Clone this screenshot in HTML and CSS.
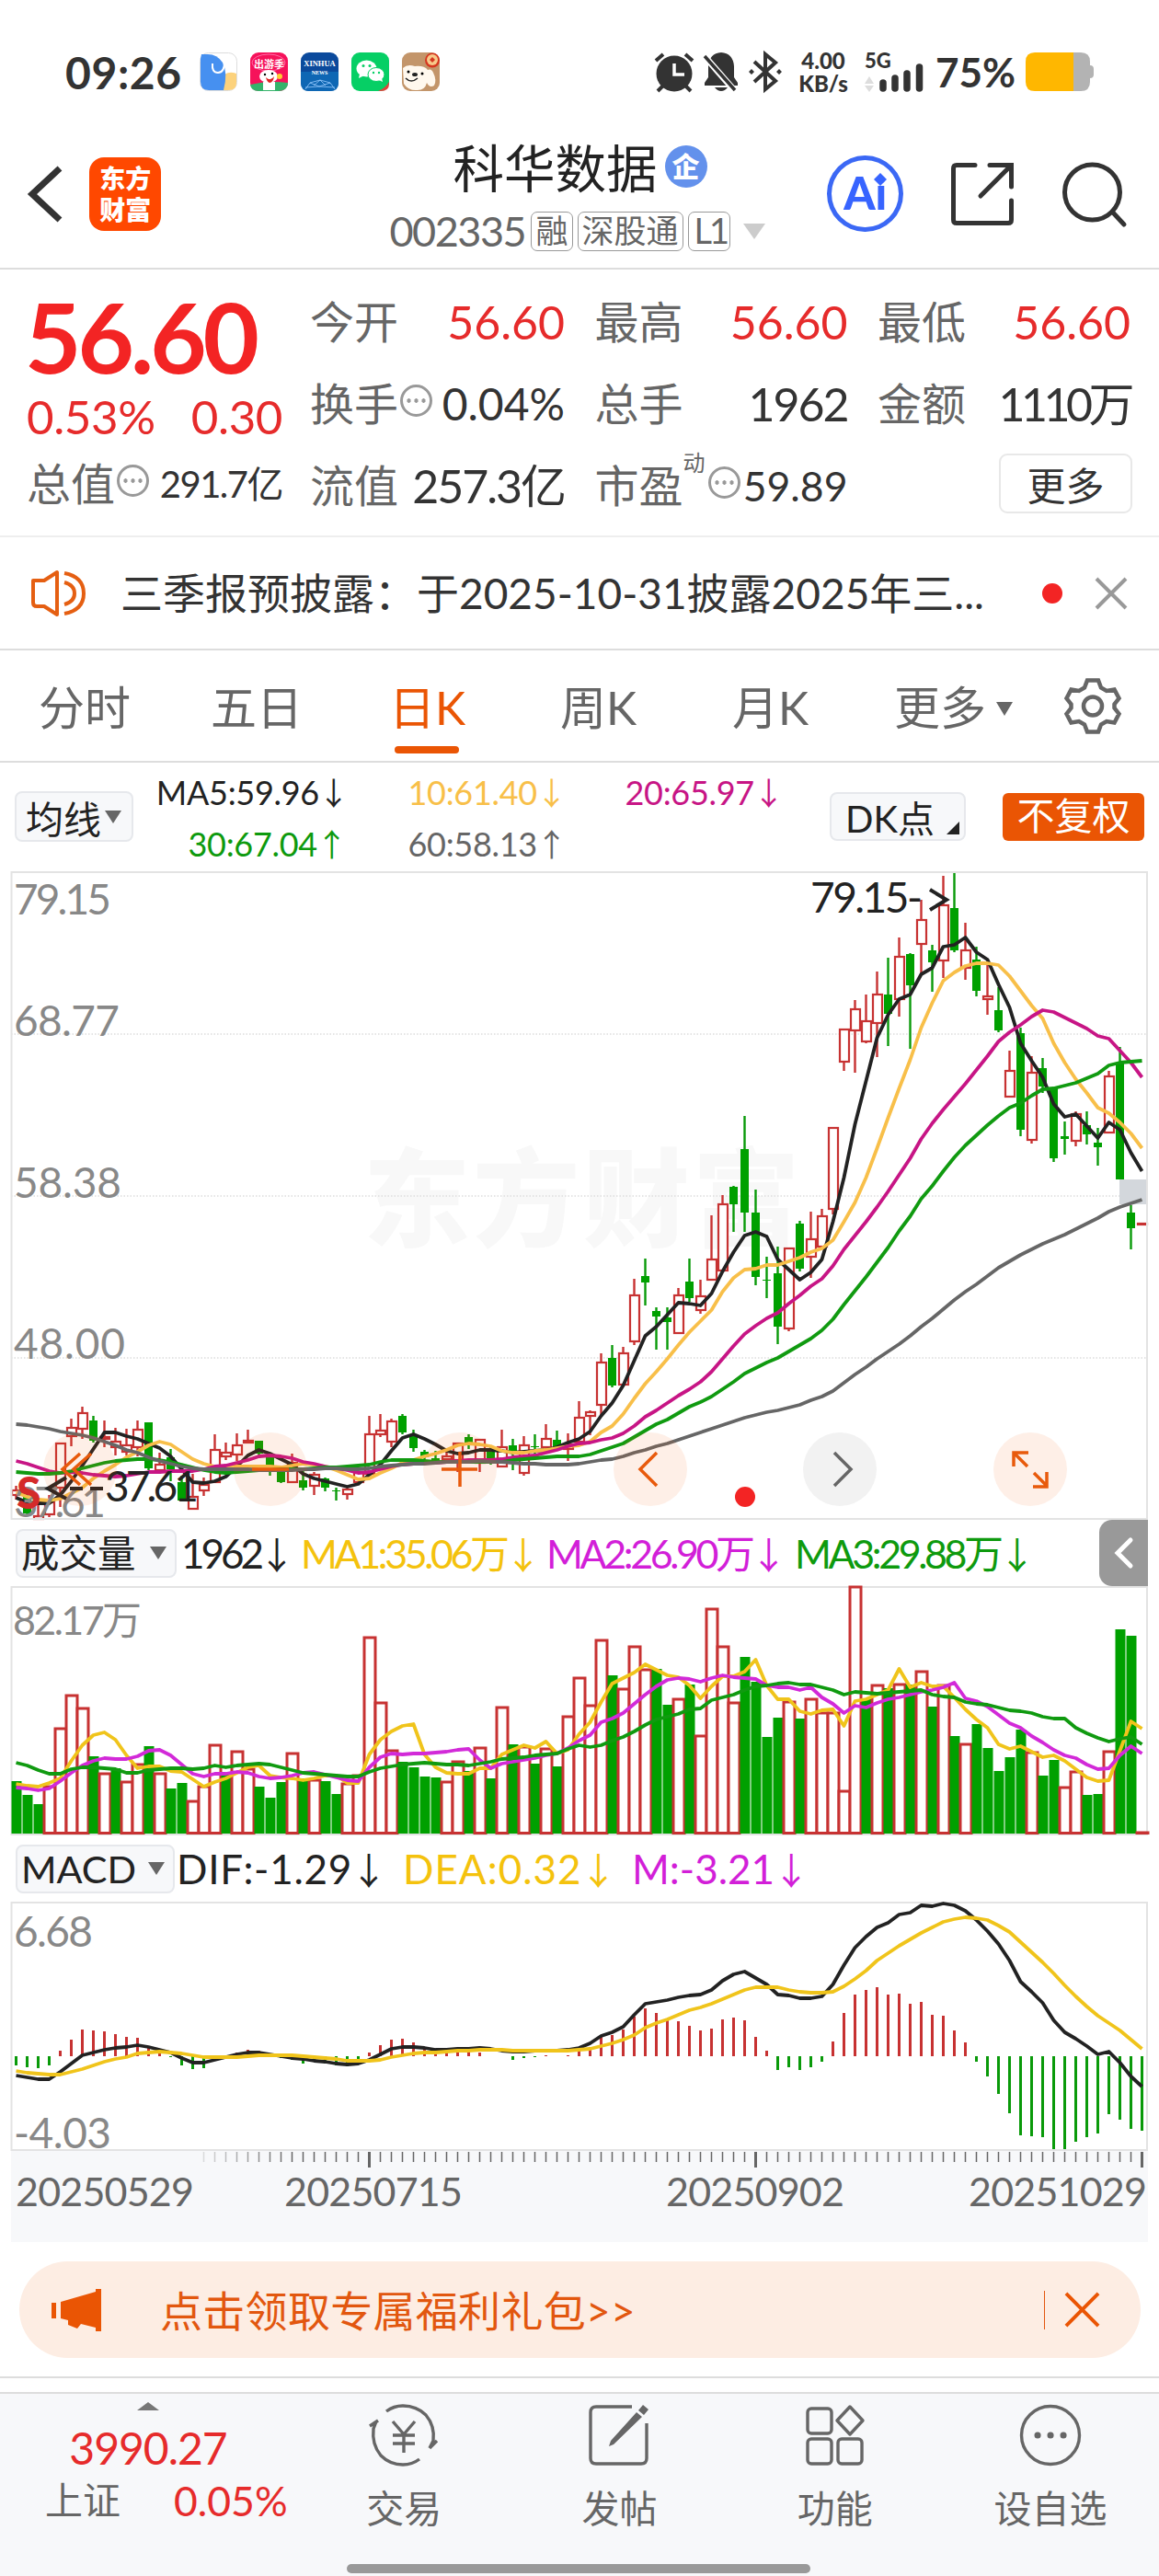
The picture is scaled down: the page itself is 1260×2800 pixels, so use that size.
FILE: index.html
```html
<!DOCTYPE html>
<html lang="zh-CN">

<head>
    <meta charset="UTF-8">
    <meta name="viewport" content="width=device-width, initial-scale=1.0">
    <title>科华数据 002335</title>
    <link rel="stylesheet" href="styles.css">
</head>

<body>
    <!-- Status bar -->
    <div class="status-bar">
        <span class="clock">09:26</span>
        <div class="app-icons">
            <svg viewBox="0 0 41 42">
                <rect x=".5" y=".5" width="40" height="41" rx="9" fill="#fff" stroke="#ddd" />
                <path d="M27 24q6-4 13-1v10q0 8-9 8h-8z" fill="#fcd27c" />
                <path d="M2 2h7q10 0 16 9 6 11 1 30H10q-9 0-9-9V7z" fill="#4690f0" />
                <path d="M14 12q-1 10 6 10 7 0 7-12" fill="none" stroke="#fff" stroke-width="2" />
            </svg>
            <svg viewBox="0 0 41 42">
                <rect width="41" height="42" rx="9" fill="#f6125a" />
                <path d="M0 35q20-5 41-2v2q-2 7-10 7H9q-8 0-9-7z" fill="#35b36b" />
                <ellipse cx="20" cy="11" rx="18" ry="9" fill="none" stroke="#ff6aa5" />
                <text x="20.500" y="17" text-anchor="middle" class="app-cn">出游季</text>
                <ellipse cx="20" cy="26" rx="10" ry="7" fill="#fff" />
                <path d="M14 32h13v9H14z" fill="#fff" />
                <path d="M17 27q5 5 9-1-1 7-5 7-3-1-4-6z" fill="#d22" />
                <circle cx="16" cy="24" r="1.200" /><circle cx="24" cy="23" r="1.200" />
                <circle cx="32" cy="26" r="3" fill="#fc3" />
            </svg>
            <svg viewBox="0 0 41 42">
                <rect width="41" height="42" rx="9" fill="#0b4a9c" />
                <path d="M0 21h41v12q0 9-9 9H9q-9 0-9-9z" fill="#0e67b4" />
                <text x="20.500" y="15" text-anchor="middle" class="app-en">XINHUA</text>
                <text x="20.500" y="24" text-anchor="middle" class="app-en small">NEWS</text>
                <path d="M5 40l5-7 11-3 11 3 5 7M10 33l10 4 12-4M14 36l7-6 6 6M5 38l15-1 17 1" fill="none" stroke="#9cf" stroke-width=".8" />
            </svg>
            <svg viewBox="0 0 41 42">
                <rect width="41" height="42" rx="9" fill="#06cf65" />
                <path d="M29 42q8-3 12-10v2q0 8-9 8z" fill="#e0443c" />
                <ellipse cx="16.500" cy="17.500" rx="11" ry="9" fill="#fff" />
                <path d="M9 23l-1 5 6-3z" fill="#fff" />
                <ellipse cx="27" cy="24" rx="9" ry="7.500" fill="#fff" stroke="#06cf65" />
                <path d="M30 30l4 2-1-4z" fill="#fff" />
                <circle cx="13" cy="14.500" r="1.500" fill="#06cf65" /><circle cx="20" cy="14.500" r="1.500" fill="#06cf65" />
                <circle cx="24" cy="22" r="1.200" fill="#06cf65" /><circle cx="30" cy="22" r="1.200" fill="#06cf65" />
            </svg>
            <svg viewBox="0 0 41 42">
                <rect width="41" height="42" rx="9" fill="#c3956a" />
                <circle cx="33" cy="8.500" r="8" fill="#d5361f" /><circle cx="33" cy="8" r="6" fill="#f7c98a" />
                <path d="M33 5l3 3-3 3-3-3z" fill="#d5361f" />
                <path d="M1 17q5-5 13-2 10-1 14 4 4-2 6 3 4 8 1 14-5 3-8-3-2 8-10 8-10 1-15-7z" fill="#fff8ee" />
                <path d="M4 28q6 6 13 0" fill="none" stroke="#222" stroke-width="1.500" />
                <ellipse cx="14" cy="24" rx="3" ry="2" fill="#222" /><circle cx="7" cy="21" r="1.500" /><circle cx="22" cy="23" r="1.500" />
            </svg>
        </div>
        <div class="sys-icons">
            <svg class="i-alarm" viewBox="0 0 44 42">
                <circle cx="22" cy="23" r="19.500" fill="#333" />
                <path d="M2 9l8-7M42 9l-8-7M10 36l-6 6M34 36l6 6" stroke="#333" stroke-width="4" />
                <path d="M22 12v12h11" fill="none" stroke="#fff" stroke-width="3.500" />
            </svg>
            <svg class="i-bell" viewBox="0 0 38 42">
                <path d="M19 0q13 1 14 15v12l4 6v3H1v-3l4-6V15Q6 1 19 0zM12 38h14q-3 4-7 4t-7-4z" fill="#333" />
                <path d="M0 3l34 39" stroke="#fff" stroke-width="7" />
                <path d="M1 4l33 37" stroke="#333" stroke-width="3.500" />
            </svg>
            <svg class="i-bt" viewBox="0 0 36 42">
                <path d="M6 10l23 21-11 9V2l11 9L6 32" fill="none" stroke="#333" stroke-width="4" />
                <path d="M3 18l3 3-3 3-3-3zM33 18l3 3-3 3-3-3z" fill="#333" />
            </svg>
            <div class="speed"><span>4.00</span><span>KB/s</span></div>
            <div class="signal">
                <span>5G</span>
                <svg viewBox="0 0 64 42">
                    <path d="M0 34l5-8 5 8zM0 36l5 7 5-7z" fill="#ddd" />
                    <path d="M20 33v6M33 28v11M46 23v16M59.500 16v23" stroke="#333" stroke-width="7.500" stroke-linecap="round" />
                </svg>
            </div>
            <span class="percent">75%</span>
            <svg class="i-battery" viewBox="0 0 74 42">
                <path d="M52 0h8q10 0 10 10v4q4 0 4 4v6q0 4-4 4v4q0 10-10 10h-8z" fill="#b3b3b3" />
                <path d="M52 0H10Q0 0 0 10v22q0 10 10 10h42z" fill="#ffb700" />
            </svg>
        </div>
    </div>

    <!-- Stock title -->
    <header class="header">
        <svg class="i-back" viewBox="0 0 38 62"><path d="M34 3L4 31l30 28" /></svg>
        <div class="logo"><span>东方</span><span>财富</span></div>
        <div class="title">
            <div class="name">科华数据<span class="badge">企</span></div>
            <div class="code"><span class="num">002335</span><span class="tag">融</span><span class="tag">深股通</span><span class="tag l1">L1</span><i class="tri"></i></div>
        </div>
        <div class="ai">Ai<svg viewBox="0 0 14 14"><path d="M7 0l7 7-7 7-7-7z" /></svg></div>
        <svg class="i-share" viewBox="0 0 68 68"><path d="M26 2.500H6q-3.500 0-3.500 3.500v56q0 3.500 3.500 3.500h56q3.500 0 3.500-3.500V41M42 2.500h23.500V26M65 3L32 36" /></svg>
        <svg class="i-search" viewBox="0 0 70 70"><circle cx="32.500" cy="33" r="30" /><path d="M54 54l13 14" /></svg>
    </header>

    <!-- Quote -->
    <section class="quote">
        <div class="quote-left">
            <div class="price">56.60</div>
            <div class="change"><span>0.53%</span><span>0.30</span></div>
            <div class="cell"><label>总值</label><i class="tip"></i><b class="sm">291.7亿</b></div>
        </div>
        <div class="quote-grid">
            <div class="cell red"><label>今开</label><b>56.60</b></div>
            <div class="cell red"><label>最高</label><b>56.60</b></div>
            <div class="cell red"><label>最低</label><b>56.60</b></div>
            <div class="cell"><label>换手</label><i class="tip"></i><b class="md">0.04%</b></div>
            <div class="cell"><label>总手</label><b class="tight">1962</b></div>
            <div class="cell"><label>金额</label><b class="tight wan">1110万</b></div>
            <div class="cell"><label>流值</label><b class="tight">257.3亿</b></div>
            <div class="cell"><label>市盈<sup>动</sup></label><i class="tip pe"></i><b class="md2">59.89</b></div>
            <div class="cell"><button class="more">更多</button></div>
        </div>
    </section>

    <!-- Notice -->
    <div class="notice">
        <svg class="i-horn" viewBox="0 0 60 50">
            <path d="M2 11h12L28 2v46L14 39H6q-4 0-4-4z" />
            <path d="M36 13q11 3 11 12t-11 12M36 3q21 4 21 22T36 47" />
        </svg>
        <span class="notice-text">三季报预披露：于2025-10-31披露2025年三...</span>
        <i class="dot"></i>
        <svg class="i-close" viewBox="0 0 34 34"><path d="M1 1l32 32M33 1L1 33" /></svg>
    </div>

    <!-- Period tabs -->
    <nav class="tabs">
        <span class="t1">分时</span>
        <span class="t2">五日</span>
        <span class="t3 active">日K</span>
        <span class="t4">周K</span>
        <span class="t5">月K</span>
        <span class="t6">更多<i class="tri"></i></span>
        <svg class="i-gear" viewBox="0 0 60 60">
            <path d="M24 2.500h12l3 8 6 3.500 8.500-1.500 5 9.500-5 6.500v4l5 6.500-5 9.500-8.500-1.500-6 3.500-3 8H24l-3-8-6-3.500-8.500 1.500-5-9.500 5-6.500v-4l-5-6.500 5-9.500L15 14l6-3.500z" />
            <circle cx="30" cy="30.500" r="10" />
        </svg>
    </nav>

    <!-- MA legend -->
    <div class="ma-row">
        <span class="select ma-select">均线<i class="tri"></i></span>
        <div class="ma-grid">
            <span class="ma5">MA5:59.96<em>↓</em></span>
            <span class="ma10">10:61.40<em>↓</em></span>
            <span class="ma20">20:65.97<em>↓</em></span>
            <span class="ma30">30:67.04<em>↑</em></span>
            <span class="ma60">60:58.13<em>↑</em></span>
        </div>
        <span class="select dk">DK点<i class="corner"></i></span>
        <span class="fq">不复权</span>
    </div>

    <!-- K line -->
    <div class="kline">
        <svg id="kline" viewBox="0 947 1260 705" width="1260" height="705">
            <text class="watermark" x="395" y="1346" textLength="474">东方财富</text>
            <path class="grid" d="M12 1124H1247M12 1300H1247M12 1476H1247" />
            <rect class="gap" x="1217" y="1282" width="30" height="27" />
            <g id="k-data"></g>
            <text class="axis" x="15" y="994" textLength="106">79.15</text>
            <text class="axis" x="15" y="1126" textLength="115">68.77</text>
            <text class="axis" x="15" y="1302" textLength="117">58.38</text>
            <text class="axis" x="15" y="1477" textLength="121">48.00</text>
            <text class="axis" x="15" y="1649" textLength="100">37.61</text>
            <text class="sell" x="18" y="1640">S</text>
            <text class="mark" x="881" y="992" textLength="122">79.15-</text>
            <path class="mark-line" d="M1011 967l18 11-18 11" />
            <path class="mark-line" d="M72 1606L52 1618l20 11M76 1618h14M98 1618h14" />
            <text class="mark" x="114" y="1632" textLength="102">37.61</text>
            <rect class="frame" x="12.500" y="948" width="1234.500" height="703" />
        </svg>
        <div class="tools">
            <i class="tool"><svg viewBox="0 0 80 80"><path d="M40 23L21 40l19 17M52 23L33 40l19 17" /></svg></i>
            <i class="tool"><svg viewBox="0 0 80 80"><path d="M20 40h40" /></svg></i>
            <i class="tool"><svg viewBox="0 0 80 80"><path d="M20 40h39M40 21v38" /></svg></i>
            <i class="tool"><svg viewBox="0 0 80 80"><path d="M47 22L29 40l18 18" /></svg></i>
            <i class="tool gray"><svg viewBox="0 0 80 80"><path d="M34 22l18 18-18 18" /></svg></i>
            <i class="tool"><svg viewBox="0 0 80 80"><path d="M22 37V22h16M23 23l14 14M58 43v16H43M57 57L44 44" /></svg></i>
        </div>
        <i class="dot tool-dot"></i>
    </div>

    <!-- Volume -->
    <div class="legend">
        <span class="select">成交量<i class="tri"></i></span>
        <span class="v0">1962<em>↓</em></span>
        <span class="v1">MA1:35.06万<em>↓</em></span>
        <span class="v2">MA2:26.90万<em>↓</em></span>
        <span class="v3">MA3:29.88万<em>↓</em></span>
        <span class="handle"><svg viewBox="0 0 20 32"><path d="M17 2L3 16l14 14" /></svg></span>
    </div>
    <svg id="volume" viewBox="0 1724 1260 271" width="1260" height="271">
        <rect class="frame" x="12.500" y="1725" width="1234.500" height="269" />
        <text class="axis vol-axis" x="14" y="1777" textLength="140">82.17万</text>
        <g id="v-data"></g>
    </svg>

    <!-- MACD -->
    <div class="legend macd-legend">
        <span class="select">MACD<i class="tri"></i></span>
        <span class="m0">DIF:-1.29<em>↓</em></span>
        <span class="m1">DEA:0.32<em>↓</em></span>
        <span class="m2">M:-3.21<em>↓</em></span>
    </div>
    <svg id="macd" viewBox="0 2067 1260 271" width="1260" height="271">
        <rect class="frame" x="12.500" y="2068" width="1234.500" height="269" />
        <text class="axis" x="15" y="2116" textLength="86">6.68</text>
        <text class="axis" x="15" y="2335" textLength="106">-4.03</text>
        <g id="m-data"></g>
    </svg>
    <div class="dates">
        <svg id="ticks" viewBox="12 0 1236 20" width="1236" height="20"></svg>
        <div class="date-row">
            <span>20250529</span>
            <span>20250715</span>
            <span>20250902</span>
            <span>20251029</span>
        </div>
    </div>

    <!-- Promo -->
    <div class="promo">
        <svg class="i-mega" viewBox="0 0 54 46"><path d="M0 15h5v17H0zM10 14L48 3V0h6v46h-6v-4l-16-4-4 5-10-4v-5l-8-2z" /></svg>
        <span>点击领取专属福利礼包&gt;&gt;</span>
        <i class="line"></i>
        <svg class="i-x" viewBox="0 0 38 38"><path d="M1 1l36 36M37 1L1 37" /></svg>
    </div>
    <div class="strip"></div>

    <!-- Bottom navigation -->
    <footer class="bottom">
        <div class="index">
            <i class="up"></i>
            <span class="index-val">3990.27</span>
            <div class="index-row"><span>上证</span><span class="index-pct">0.05%</span></div>
        </div>
        <div class="item">
            <svg viewBox="0 0 76 68">
                <path d="M19 8q8-6 18-6 15 0 25 10 10 12 8 28l-4 8M66 48l8-8M55 60q-8 6-18 6-14 0-24-10Q3 44 5 27l3-8M1 24l9-6" />
                <path class="yen" d="M26 19l12 14 12-14M26 34h24M26 43h24M38 33v20" />
            </svg>
            <span>交易</span>
        </div>
        <div class="item">
            <svg viewBox="0 0 76 68">
                <path d="M52 3H13q-6 0-6 6v50q0 6 6 6h49q6 0 6-6V21" />
                <path d="M64 1l6 5-5 6-6-5zM57 9l6 5-31 30-5 2 2-6z" class="fill" />
            </svg>
            <span>发帖</span>
        </div>
        <div class="item">
            <svg viewBox="0 0 76 68">
                <rect x="8" y="5" width="26" height="27" rx="4" /><rect x="8" y="38" width="26" height="27" rx="4" />
                <rect x="41" y="38" width="26" height="27" rx="4" /><path d="M54 3l14 15-14 15-14-15z" stroke-linejoin="round" />
            </svg>
            <span>功能</span>
        </div>
        <div class="item">
            <svg viewBox="0 0 76 68">
                <circle cx="38" cy="34" r="31.500" />
                <path d="M24 34h.1M38 34h.1M52 34h.1" stroke-width="7" stroke-linecap="round" />
            </svg>
            <span>设自选</span>
        </div>
    </footer>
    <div class="home"><i></i></div>

    <script src="script.js"></script>
</body>

</html>
```
FILE: styles.css
```css
body {
    margin: 0;
    width: 1260px;
    height: 2800px;
    overflow: hidden;
    background-color: #fff;
    color: #333;
    font-family: Lato, "Noto Sans CJK SC", sans-serif;
}

* {
    box-sizing: border-box;
}

svg {
    display: block;
    flex: none;
    overflow: visible;
}

i, em {
    font-style: normal;
}

/* Status bar */
.status-bar {
    display: flex;
    align-items: center;
    height: 156px;
    padding-left: 71px;
}

.clock {
    width: 146px;
    font-size: 48px;
    font-weight: 700;
    letter-spacing: 0.6px;
}

.app-icons {
    display: flex;
    gap: 14px;
}

.app-icons svg {
    width: 41px;
    height: 42px;
}

.app-cn {
    font: bold 11px "Noto Sans CJK SC", sans-serif;
    fill: #fff;
}

.app-en {
    font: bold 8.5px "Liberation Serif", serif;
    fill: #fff;
}

.app-en.small {
    font-size: 6px;
}

.sys-icons {
    display: flex;
    align-items: center;
    margin-left: 233px;
}

.i-alarm {
    width: 44px;
    height: 42px;
}

.i-bell {
    width: 38px;
    height: 42px;
    margin-left: 10px;
}

.i-bt {
    width: 36px;
    height: 42px;
    margin-left: 11px;
}

.speed {
    display: flex;
    flex-direction: column;
    align-items: center;
    width: 56px;
    margin-left: 17px;
    font-size: 24px;
    font-weight: 900;
    line-height: 25px;
}

.signal {
    position: relative;
    width: 64px;
    height: 42px;
    margin-left: 17px;
}

.signal span {
    position: absolute;
    top: -3px;
    left: 0;
    font-size: 22px;
    font-weight: 900;
    line-height: 24px;
}

.percent {
    width: 98px;
    margin-left: 13px;
    font-size: 44px;
    font-weight: 700;
}

.i-battery {
    width: 74px;
    height: 42px;
}

/* Header */
.header {
    display: flex;
    align-items: center;
    height: 137px;
    padding: 0 35px 26px 31px;
    border-bottom: 2px solid #ddd;
}

.header svg {
    fill: none;
    stroke: #333;
    stroke-width: 5;
    stroke-linecap: round;
}

.header .i-back {
    width: 38px;
    height: 62px;
    stroke-width: 7;
    stroke-linecap: butt;
}

.logo {
    display: flex;
    flex-direction: column;
    align-items: center;
    justify-content: center;
    width: 79px;
    height: 80px;
    margin-left: 28px;
    border-radius: 16px;
    background-color: #ff4800;
    color: #fff;
    font-size: 28px;
    font-weight: 900;
    line-height: 34px;
}

.title {
    width: 408px;
    margin-left: 248px;
    padding-top: 4px;
    white-space: nowrap;
}

.name {
    display: flex;
    align-items: center;
    height: 56px;
    padding-left: 69px;
    color: #222;
    font-size: 55.5px;
}

.badge {
    width: 46px;
    height: 46px;
    margin: 2px 0 0 8px;
    border-radius: 50%;
    background-color: #6391ec;
    color: #fff;
    font-size: 30px;
    font-weight: 900;
    line-height: 44px;
    text-align: center;
}

.code {
    display: flex;
    align-items: center;
    height: 44px;
    margin-top: 21px;
    color: #666;
}

.code .num {
    width: 154px;
    font-size: 45px;
    letter-spacing: -1.5px;
    flex: none;
}

.tag {
    height: 43px;
    margin-right: 5px;
    padding: 0 4px;
    border: 1.5px solid #999;
    border-radius: 7px;
    font-size: 35px;
    line-height: 38px;
    flex: none;
}

.tag.l1 {
    width: 46px;
    padding-left: 6px;
    font-size: 38px;
    letter-spacing: -3px;
}

.tri {
    display: inline-block;
    border: 12px solid transparent;
    border-top: 17px solid #ccc;
    border-bottom: 0;
}

.code .tri {
    margin-left: 9px;
}

.ai {
    position: relative;
    width: 83px;
    height: 83px;
    margin-left: 68px;
    border: 5px solid #3b68f5;
    border-radius: 50%;
    color: #3764ff;
    font-size: 49px;
    font-weight: 900;
    line-height: 70px;
    text-align: center;
}

.header .ai svg {
    position: absolute;
    top: 14px;
    left: 46px;
    width: 14px;
    height: 14px;
    fill: #3764ff;
    stroke: none;
}

.i-share {
    width: 68px;
    height: 68px;
    margin-left: 52px;
}

.i-search {
    width: 70px;
    height: 70px;
    margin-left: 53px;
}

/* Quote */
.quote {
    display: flex;
    height: 291px;
    padding: 12px 0 0 29px;
    border-bottom: 2px solid #eee;
}

.quote-left {
    width: 278px;
    margin-right: 30px;
}

.price {
    height: 118px;
    margin-left: -2px;
    color: #f32424;
    font-size: 106px;
    font-weight: 700;
    letter-spacing: -4px;
    line-height: 120px;
}

.change {
    display: flex;
    justify-content: space-between;
    height: 58px;
    color: #e62b2b;
    font-size: 51px;
    letter-spacing: -0.4px;
    line-height: 59px;
}

.quote-grid {
    display: grid;
    grid-template-columns: 277px 275px 275px;
    grid-auto-rows: 89px;
    column-gap: 32.5px;
}

.cell {
    display: flex;
    align-items: center;
    height: 89px;
    line-height: 60px;
}

.cell label {
    color: #666;
    font-size: 48px;
    white-space: nowrap;
}

.cell b {
    margin-left: auto;
    font-size: 50px;
    font-weight: 400;
    white-space: nowrap;
}

.cell.red b {
    color: #e62b2b;
}

.cell .sm {
    font-size: 40px;
    letter-spacing: -1.5px;
}

.cell .md {
    font-size: 48px;
}

.cell .md2 {
    font-size: 44.5px;
}

.cell .tight {
    letter-spacing: -2px;
}

.cell .wan {
    letter-spacing: -4.5px;
}

.cell sup {
    position: absolute;
    margin-top: -25px;
    font-size: 24px;
}

.tip {
    width: 35px;
    height: 35px;
    margin: -6px 0 0 2px;
    border: 3px solid #999;
    border-radius: 50%;
    background: radial-gradient(circle 2.5px, #999 90%, transparent) 50% 50% / 8px 100%;
    background-clip: content-box;
    padding: 0 3px;
}

.tip.pe {
    margin-left: 27px;
}

.more {
    width: 145px;
    height: 65px;
    margin: -4px 0 0 132px;
    padding: 0;
    border: 2px solid #e8e8e8;
    border-radius: 9px;
    background: #fff;
    color: #333;
    font: 42px "Noto Sans CJK SC", sans-serif;
    flex: none;
    line-height: 56px;
}

/* Notice */
.notice {
    display: flex;
    align-items: center;
    height: 123px;
    padding-left: 34px;
    border-bottom: 2px solid #ddd;
}

.i-horn {
    width: 60px;
    height: 50px;
    fill: none;
    stroke: #e55f12;
    stroke-width: 4;
    stroke-linejoin: round;
}

.notice-text {
    width: 960px;
    margin: -6px 0 0 37px;
    font-size: 46px;
    white-space: nowrap;
}

.dot {
    width: 22px;
    height: 22px;
    margin-left: 42px;
    border-radius: 50%;
    background-color: #f32424;
}

.i-close {
    width: 34px;
    height: 34px;
    margin-left: 36px;
    stroke: #999;
    stroke-width: 4;
}

/* Tabs */
.tabs {
    display: flex;
    align-items: center;
    height: 122px;
    padding-left: 42px;
    border-bottom: 2px solid #ddd;
    color: #666;
    font-size: 50px;
}

.tabs span {
    height: 111px;
    line-height: 114px;
    white-space: nowrap;
}

.t1 {
    width: 187px;
}

.t2 {
    width: 194px;
}

.t3 {
    width: 186px;
}

.t4 {
    width: 187px;
}

.t5 {
    width: 176px;
}

.t6 {
    width: 186px;
}

.tabs .active {
    position: relative;
    color: #ea5504;
}

.tabs .active::after {
    content: "";
    position: absolute;
    left: 6px;
    bottom: 4px;
    width: 70px;
    height: 8px;
    border-radius: 4px;
    background-color: #ea5504;
}

.tabs .tri {
    margin: 0 0 10px 11px;
    border-width: 15px 9px 0;
    border-top-color: #666;
}

.i-gear {
    width: 60px;
    height: 60px;
    fill: none;
    stroke: #666;
    stroke-width: 4.5;
}

/* Indicator rows */
.select {
    display: inline-flex;
    align-items: center;
    height: 53px;
    border: 2px solid #e6e8ec;
    border-radius: 8px;
    background-color: #f7f8fa;
    color: #222;
    white-space: nowrap;
}

.select .tri {
    border-width: 14px 9px 0;
    border-top-color: #666;
}

em {
    display: inline-flex;
    justify-content: center;
    font-family: "Noto Sans CJK SC", sans-serif;
    letter-spacing: 0;
}

.ma-row {
    display: flex;
    height: 118px;
    padding: 4px 16px 0;
}

.ma-select {
    width: 129px;
    height: 55px;
    margin: 27px 25px 0 0;
    padding-left: 10px;
    font-size: 41px;
}

.ma-select .tri {
    margin-left: 4px;
}

.ma-grid {
    display: grid;
    grid-template-columns: 204px 239px 236px;
    grid-auto-rows: 56px;
    width: 700px;
    font-size: 36px;
    line-height: 56px;
    text-align: right;
    letter-spacing: -0.3px;
    white-space: nowrap;
}

.ma-grid em {
    width: 26px;
    margin-left: 3px;
    font-size: 34px;
}

.ma5 {
    color: #222;
}

.ma10 {
    color: #f8bf49;
}

.ma20 {
    color: #c71585;
}

.ma30 {
    color: #0e9a0e;
}

.ma60 {
    color: #666;
}

.dk {
    position: relative;
    width: 148px;
    margin: 28px 40px 0 33px;
    padding-left: 15px;
    font-size: 40px;
    flex: none;
}

.corner {
    position: absolute;
    right: 5px;
    bottom: 5px;
    border-left: 14px solid transparent;
    border-bottom: 14px solid #222;
}

.fq {
    width: 154px;
    height: 52px;
    margin-top: 29px;
    border-radius: 6px;
    background-color: #ea5504;
    color: #fff;
    font-size: 41px;
    line-height: 49px;
    text-align: center;
    flex: none;
}

.legend {
    display: flex;
    align-items: center;
    height: 72px;
    padding-left: 17px;
    font-size: 44px;
    line-height: 60px;
    white-space: nowrap;
}

.legend .select {
    width: 175px;
    padding-left: 4px;
    font-size: 41.5px;
    line-height: 46px;
}

.legend .select .tri {
    margin-left: auto;
    margin-right: 9px;
}

.legend em {
    width: 26px;
    margin-left: 5px;
    font-size: 40px;
}

.v0 {
    width: 135px;
    padding-left: 5px;
    color: #222;
    letter-spacing: -4px;
}

.v1 {
    width: 267px;
    color: #f4c20d;
}

.v2 {
    width: 270px;
    color: #d21fd8;
}

.v3 {
    width: 331px;
    color: #0e9a0e;
}

.v1, .v2, .v3 {
    font-size: 43px;
    letter-spacing: -3.4px;
}

.handle {
    display: flex;
    align-items: center;
    width: 53px;
    height: 72px;
    padding-left: 17px;
    border-radius: 14px 0 0 14px;
    background-color: #999;
}

.handle svg {
    width: 20px;
    height: 32px;
    fill: none;
    stroke: #fff;
    stroke-width: 5;
    stroke-linecap: round;
}

.macd-legend .select {
    width: 173px;
}

.m0 {
    width: 248px;
    padding-left: 2px;
    color: #222;
    letter-spacing: 0.7px;
}

.m1 {
    width: 249px;
    color: #f4c20d;
    letter-spacing: 1px;
}

.m2 {
    color: #d21fd8;
}

/* Charts */
.kline {
    position: relative;
    height: 705px;
}

.frame {
    fill: none;
    stroke: #e3e3e3;
    stroke-width: 2;
}

.grid {
    stroke: #ddd;
    stroke-width: 1.5;
    stroke-dasharray: 1.5 2;
}

.gap {
    fill: #d3d7dc;
}

.watermark {
    font: 900 116px "Noto Sans CJK SC", sans-serif;
    fill: #f8f8f8;
}

.axis {
    font-size: 46px;
    fill: #888;
}

.vol-axis {
    font-size: 43px;
}

.mark {
    font-size: 46px;
    fill: #222;
}

.mark-line {
    fill: none;
    stroke: #222;
    stroke-width: 4;
}

.sell {
    font-size: 48px;
    font-weight: 900;
    fill: #d42a2a;
}

.up-bar {
    fill: #fff;
    stroke: #c73232;
    stroke-width: 2.2;
}

.vol-bar {
    fill: #fff;
    stroke: #c73232;
    stroke-width: 3;
}

.down-bar {
    fill: #00a000;
}

.wick {
    stroke: #c73232;
    stroke-width: 2.4;
}

.hist {
    stroke-width: 3;
}

.wick.down {
    stroke: #0a9a0a;
}

.line {
    fill: none;
    stroke-width: 3.8;
    stroke-linejoin: round;
}

.tools {
    position: absolute;
    top: 610px;
    left: 47px;
    display: flex;
    gap: 126.6px;
}

.tool {
    width: 80px;
    height: 80px;
    border-radius: 50%;
    background-color: rgba(250, 95, 20, 0.1);
}

.tool svg {
    fill: none;
    stroke: #e85a0c;
    stroke-width: 3.5;
}

.tool.gray {
    background-color: #f2f2f2;
}

.tool.gray svg {
    stroke: #666;
}

.tool-dot {
    position: absolute;
    top: 669px;
    left: 799px;
    margin: 0;
}

.dates {
    width: 1236px;
    height: 99px;
    margin-left: 12px;
    background-color: #f7f8fa;
}

.date-row {
    display: grid;
    grid-template-columns: 292px 415px 329px 187px;
    padding: 2px 0 0 5px;
    color: #666;
    font-size: 43px;
    line-height: 43px;
    letter-spacing: -0.8px;
}

/* Promo */
.promo {
    display: flex;
    align-items: center;
    width: 1219px;
    height: 105px;
    margin: 21px 0 20px 21px;
    padding-left: 35px;
    border-radius: 53px;
    background-color: #fdede3;
    color: #e2570f;
    font-size: 46px;
}

.i-mega {
    width: 54px;
    height: 46px;
    fill: #ea5504;
}

.promo span {
    width: 961px;
    margin: -4px 0 0 64px;
    letter-spacing: 0.3px;
}

.promo .line {
    width: 1px;
    height: 42px;
    margin-right: 22px;
    background-color: #e2570f;
}

.i-x {
    width: 37px;
    height: 37px;
    stroke: #ea5504;
    stroke-width: 4;
}

.strip {
    height: 19px;
    border-top: 2px solid #ddd;
    border-bottom: 2px solid #ddd;
}

/* Bottom navigation */
.bottom {
    display: flex;
    height: 185px;
    background-color: #f7f8fa;
    color: #666;
    font-size: 41px;
}

.index {
    display: flex;
    flex-direction: column;
    align-items: center;
    width: 322px;
    padding-top: 9px;
}

.up {
    border: 12px solid transparent;
    border-top: 0;
    border-bottom: 9px solid #777;
}

.index-val {
    height: 58px;
    margin-top: 8px;
    color: #e62b2b;
    font-size: 48px;
    letter-spacing: -1px;
    line-height: 66px;
}

.index-row {
    display: flex;
    align-items: center;
    gap: 58px;
    width: 322px;
    padding: 2px 0 0 49px;
    line-height: 60px;
}

.index-pct {
    color: #e62b2b;
    font-size: 44.5px;
}

.item {
    display: flex;
    flex-direction: column;
    align-items: center;
    width: 234.3px;
    padding-top: 11px;
}

.item svg {
    width: 76px;
    height: 68px;
    fill: none;
    stroke: #666;
    stroke-width: 3.4;
}

.item .fill {
    fill: #666;
    stroke: none;
}

.item span {
    margin-top: 16px;
    line-height: 60px;
}

.home {
    height: 13px;
    background-color: #f7f8fa;
}

.home i {
    display: block;
    width: 504px;
    height: 10px;
    margin-left: 377px;
    border-radius: 5px;
    background-color: #999;
}
```
FILE: script.js
```js
// Chart data, one entry per trading day
const FIRST_X = 17.5;
const STEP = 12;

// type, body top, body bottom, wick top, wick bottom
const candles = `
r 1620 1625 1615 1630|g 1627 1645 1622 1647|r 1648 1651 1630 1651|r 1633 1646 1625 1649|r 1569 1617 1569 1638
r 1552 1561 1542 1572|r 1536 1553 1529 1564|g 1544 1566 1539 1568|r 1562 1564 1544 1573|r 1567 1573 1552 1582
r 1571 1578 1553 1582|r 1554 1573 1544 1583|g 1546 1596 1546 1598|r 1592 1598 1579 1602|g 1584 1597 1575 1610
g 1611 1631 1604 1631|r 1627 1640 1602 1640|r 1614 1620 1606 1626|r 1576 1611 1559 1611|r 1579 1583 1568 1587
r 1571 1581 1558 1588|r 1566 1568 1554 1568|g 1566 1580 1566 1585|g 1584 1599 1584 1604|g 1599 1611 1599 1612
r 1590 1611 1580 1611|g 1609 1617 1598 1620|r 1603 1615 1600 1625|g 1607 1617 1606 1621|g 1620 1621 1617 1631
r 1619 1624 1616 1630|r 1601 1611 1601 1611|r 1559 1602 1539 1602|r 1555 1559 1537 1562|r 1545 1567 1542 1573
g 1539 1557 1537 1559|g 1559 1574 1554 1578|g 1578 1584 1576 1590|g 1585 1587 1577 1590|r 1583 1586 1575 1588
r 1569 1587 1569 1600|g 1562 1568 1559 1575|r 1565 1590 1565 1600|g 1577 1587 1573 1592|r 1573 1594 1554 1595
g 1571 1578 1564 1598|r 1571 1601 1561 1604|g 1572 1573 1559 1580|r 1564 1573 1548 1577|g 1565 1573 1555 1577
r 1570 1575 1558 1588|r 1541 1567 1523 1570|r 1535 1539 1533 1560|r 1481 1527 1471 1538|g 1476 1506 1462 1508
r 1471 1505 1464 1505|r 1408 1458 1390 1462|g 1387 1394 1368 1419|g 1425 1431 1421 1467|g 1432 1437 1421 1467
r 1408 1449 1400 1450|g 1393 1411 1368 1415|r 1409 1424 1391 1428|r 1369 1391 1321 1391|r 1309 1381 1299 1382
g 1290 1309 1289 1339|g 1249 1318 1213 1339|g 1318 1388 1293 1397|g 1391 1392 1366 1411|g 1384 1442 1355 1461
r 1357 1444 1357 1447|g 1330 1379 1327 1382|r 1347 1366 1317 1389|r 1322 1355 1314 1356|r 1226 1314 1226 1320
r 1119 1154 1119 1164|r 1097 1120 1087 1166|r 1110 1132 1081 1134|r 1081 1112 1056 1149|g 1081 1102 1041 1137
r 1040 1086 1019 1105|g 1037 1071 1036 1140|r 1000 1026 978 1058|g 1033 1046 1027 1078|r 984 1044 952 1063
g 987 1033 948 1035|r 1033 1052 1003 1065|g 1043 1077 1029 1083|r 1083 1086 1045 1103|g 1098 1120 1073 1122
r 1164 1192 1142 1193|g 1123 1228 1117 1235|r 1166 1239 1148 1243|g 1161 1181 1150 1188|g 1183 1259 1183 1263
g 1235 1238 1219 1255|r 1211 1240 1208 1246|g 1223 1233 1208 1244|g 1242 1247 1226 1267|r 1170 1231 1164 1231
g 1155 1282 1138 1282|g 1318 1335 1310 1358|r 1330 1330 1330 1330`.trim().split(/[|\n]/).map(s => s.split(' '));

const priceLines = [
    ['#222', '1628 1633 1634 1634 1625 1610 1593 1575 1557 1557 1561 1564 1569 1574 1583 1597 1611 1612 1610 1605 1594 1582 1576 1580 1586 1592 1602 1607 1610 1613 1616 1613 1603 1592 1577 1563 1559 1564 1570 1577 1580 1579 1576 1576 1577 1579 1578 1577 1576 1573 1568 1564 1556 1539 1525 1506 1479 1452 1442 1429 1416 1417 1419 1406 1382 1361 1343 1339 1344 1369 1380 1391 1383 1369 1328 1280 1222 1175 1128 1103 1086 1081 1059 1052 1029 1027 1019 1035 1043 1070 1095 1134 1153 1171 1200 1214 1211 1224 1237 1220 1228 1253 1273'],
    ['#f8bf49', '1622 1627 1630 1631 1629 1623 1617 1607 1599 1592 1584 1578 1571 1567 1570 1578 1586 1591 1594 1594 1594 1594 1594 1594 1595 1593 1591 1592 1594 1598 1603 1608 1607 1601 1596 1590 1587 1583 1580 1576 1571 1569 1570 1572 1577 1579 1579 1577 1576 1574 1572 1571 1567 1557 1550 1537 1520 1504 1491 1477 1462 1448 1436 1424 1404 1389 1380 1379 1375 1375 1371 1367 1361 1357 1348 1328 1307 1280 1248 1215 1183 1152 1117 1090 1066 1057 1050 1047 1047 1049 1061 1077 1093 1107 1134 1155 1173 1188 1204 1210 1220 1232 1248'],
    ['#c71585', '1588 1591 1595 1599 1601 1600 1601 1603 1604 1605 1604 1602 1600 1600 1599 1599 1599 1597 1594 1593 1590 1587 1583 1582 1583 1585 1589 1591 1594 1596 1598 1601 1600 1597 1594 1592 1591 1590 1590 1589 1588 1587 1587 1587 1586 1584 1583 1582 1579 1576 1572 1569 1568 1565 1563 1558 1550 1540 1533 1525 1517 1510 1502 1491 1477 1463 1450 1441 1433 1427 1417 1408 1398 1390 1376 1358 1343 1328 1312 1295 1277 1259 1238 1221 1206 1192 1178 1163 1148 1132 1122 1114 1105 1098 1100 1106 1112 1118 1126 1129 1142 1155 1171'],
    ['#109a10', '1600 1601 1602 1602 1601 1599 1596 1593 1590 1588 1587 1586 1586 1587 1589 1592 1595 1598 1600 1601 1600 1599 1598 1598 1597 1597 1597 1596 1595 1595 1594 1593 1592 1589 1587 1587 1587 1588 1589 1589 1589 1589 1589 1589 1589 1587 1586 1585 1584 1583 1583 1583 1581 1577 1573 1569 1562 1555 1548 1543 1536 1529 1524 1518 1510 1502 1493 1487 1481 1476 1469 1462 1455 1446 1434 1418 1403 1388 1372 1356 1338 1322 1303 1289 1273 1258 1245 1234 1223 1213 1204 1199 1191 1184 1183 1180 1177 1172 1167 1158 1155 1154 1153'],
    ['#666', '1548 1549 1551 1553 1556 1558 1560 1563 1567 1571 1576 1579 1584 1588 1591 1594 1596 1597 1597 1597 1597 1597 1598 1598 1598 1598 1597 1597 1596 1596 1597 1597 1596 1594 1593 1592 1591 1591 1590 1589 1589 1589 1588 1589 1589 1590 1591 1591 1592 1592 1592 1591 1589 1587 1586 1583 1579 1576 1572 1569 1565 1561 1557 1553 1549 1545 1541 1538 1535 1533 1530 1527 1522 1518 1512 1503 1494 1486 1477 1469 1461 1452 1442 1433 1423 1413 1404 1396 1387 1378 1371 1364 1358 1352 1347 1342 1336 1330 1324 1317 1312 1308 1304']
];

const volumes = 'g1936 g1951 g1961 r1942 r1879 r1843 r1857 g1909 r1928 g1922 r1937 r1918 g1898 r1928 g1944 g1938 r1958 r1942 r1897 g1929 r1904 r1923 g1942 g1954 g1937 r1906 g1933 r1935 g1936 g1950 r1939 r1930 r1780 r1851 r1903 g1915 g1921 g1931 g1932 r1937 r1915 g1925 r1900 g1933 r1856 g1896 r1899 g1917 r1901 g1920 r1866 r1824 r1854 r1783 g1821 r1836 r1790 r1815 g1814 g1853 r1847 g1831 r1887 r1749 r1790 r1851 g1801 g1828 g1888 g1867 r1850 g1868 r1847 r1862 r1862 r1947 r1725 g1846 r1832 g1835 r1831 g1831 r1817 g1855 r1832 g1887 r1896 g1874 g1900 g1925 g1910 g1880 r1905 g1930 g1913 r1943 r1926 g1951 g1950 r1904 g1771 g1778 r1992'.split(' ');

const volumeLines = [
    ['#f0c41b', '1939 1941 1942 1938 1933 1914 1897 1886 1883 1891 1908 1922 1920 1920 1925 1926 1934 1942 1937 1933 1927 1921 1919 1930 1932 1933 1935 1933 1930 1930 1938 1938 1907 1891 1882 1876 1874 1907 1921 1927 1928 1928 1922 1922 1907 1902 1897 1900 1893 1906 1902 1885 1872 1850 1830 1824 1818 1809 1815 1821 1823 1832 1846 1833 1822 1822 1817 1804 1832 1847 1847 1860 1863 1859 1858 1876 1849 1847 1842 1837 1814 1834 1829 1833 1833 1845 1858 1869 1878 1896 1901 1898 1904 1910 1908 1914 1923 1932 1936 1935 1903 1871 1879'],
    ['#d22ad8', '1943 1944 1946 1944 1936 1927 1919 1914 1911 1912 1912 1909 1903 1902 1908 1918 1928 1931 1928 1928 1926 1927 1931 1933 1932 1930 1927 1926 1929 1932 1935 1936 1921 1910 1906 1907 1906 1906 1905 1904 1902 1901 1913 1922 1917 1915 1913 1911 1908 1906 1900 1892 1886 1872 1868 1862 1852 1842 1833 1826 1824 1825 1828 1824 1821 1823 1824 1825 1832 1834 1834 1837 1834 1845 1852 1862 1854 1856 1851 1847 1845 1842 1839 1837 1834 1829 1846 1849 1855 1864 1873 1878 1887 1894 1902 1908 1911 1918 1923 1922 1908 1898 1906'],
    ['#109a10', '1916 1919 1924 1928 1928 1923 1921 1921 1922 1923 1927 1927 1924 1923 1922 1922 1923 1922 1919 1921 1919 1918 1917 1918 1921 1924 1927 1928 1929 1930 1931 1931 1926 1922 1920 1918 1917 1916 1917 1918 1918 1919 1917 1915 1912 1911 1910 1908 1907 1906 1901 1897 1899 1897 1892 1888 1882 1875 1869 1866 1863 1858 1857 1848 1845 1842 1837 1833 1832 1830 1829 1831 1831 1834 1837 1842 1839 1840 1841 1840 1839 1838 1837 1842 1844 1845 1850 1852 1853 1856 1859 1860 1862 1866 1868 1868 1878 1884 1889 1893 1890 1888 1896']
];

const ZERO = 2235;
const macd = '2245 2247 2248 2245 2229 2217 2206 2207 2208 2211 2214 2215 2224 2229 2236 2245 2249 2248 2238 2234 2231 2228 2229 2232 2237 2239 2243 2241 2243 2245 2246 2243 2231 2223 2217 2216 2220 2227 2229 2231 2230 2230 2231 2235 2235 2239 2237 2236 2234 2235 2234 2229 2225 2213 2212 2206 2192 2183 2188 2196 2197 2202 2207 2205 2195 2193 2196 2214 2229 2250 2247 2250 2247 2241 2219 2188 2168 2163 2160 2168 2167 2178 2176 2190 2191 2207 2220 2241 2257 2276 2297 2321 2322 2323 2336 2336 2328 2323 2319 2298 2304 2314 2316'.split(' ');

const macdLines = [
    ['#222', '2256 2258 2260 2260 2252 2243 2234 2231 2228 2226 2225 2223 2225 2228 2231 2237 2242 2242 2239 2236 2233 2231 2231 2233 2235 2237 2238 2240 2241 2243 2244 2243 2239 2233 2227 2225 2225 2226 2228 2228 2227 2227 2226 2227 2229 2230 2230 2229 2229 2229 2228 2226 2221 2213 2209 2203 2190 2178 2176 2174 2171 2169 2168 2163 2153 2146 2143 2150 2157 2168 2169 2172 2172 2170 2157 2136 2117 2105 2095 2090 2081 2079 2071 2072 2069 2071 2077 2087 2099 2113 2131 2154 2165 2177 2196 2209 2216 2224 2233 2230 2242 2257 2268'],
    ['#f0c41b', '2251 2253 2254 2255 2255 2252 2249 2245 2241 2238 2236 2232 2231 2230 2231 2232 2234 2236 2236 2236 2236 2235 2234 2234 2234 2234 2235 2236 2237 2238 2240 2240 2240 2239 2236 2234 2232 2231 2231 2230 2229 2229 2228 2228 2228 2229 2229 2229 2229 2229 2229 2228 2227 2224 2221 2217 2212 2204 2199 2195 2190 2185 2182 2178 2173 2168 2163 2160 2160 2160 2163 2165 2166 2166 2165 2159 2151 2142 2131 2123 2115 2108 2101 2095 2089 2086 2084 2085 2087 2093 2100 2111 2122 2133 2145 2158 2170 2181 2191 2199 2207 2217 2227']
];

function xAt(i) {
    return FIRST_X + i * STEP;
}

function drawLines(lines) {
    return lines.map(([color, values]) => {
        const points = values.split(' ').map((y, i) => xAt(i) + ',' + y).join(' ');
        return `<polyline class="line" stroke="${color}" points="${points}" />`;
    }).join('');
}

// Candles with moving averages on top
let html = '';
candles.forEach(([type, top, bottom, high, low], i) => {
    const x = xAt(i);
    const h = Math.max(bottom - top, 1);
    html += `<path class="wick ${type === 'g' ? 'down' : ''}" d="M${x} ${high}V${low}" />`;
    if (type === 'g') {
        html += `<rect class="down-bar" x="${x - 4.5}" y="${top}" width="9" height="${h}" />`;
    } else {
        html += `<rect class="up-bar" x="${x - 4.5}" y="${top}" width="10" height="${h}" />`;
    }
});
document.getElementById('k-data').innerHTML = html + drawLines(priceLines);

// Volume bars
html = '';
volumes.forEach((v, i) => {
    const x = xAt(i);
    const top = Number(v.slice(1));
    if (v[0] === 'g') {
        html += `<rect class="down-bar" x="${x - 5}" y="${top}" width="11" height="${1993 - top}" />`;
    } else {
        html += `<rect class="vol-bar" x="${x - 5.5}" y="${top}" width="12" height="${1992.5 - top}" />`;
    }
});
document.getElementById('v-data').innerHTML = html + drawLines(volumeLines);

// MACD histogram
html = '';
macd.forEach((y, i) => {
    html += `<path class="wick hist ${y > ZERO ? 'down' : ''}" d="M${xAt(i)} ${ZERO}V${y}" />`;
});
document.getElementById('m-data').innerHTML = html + drawLines(macdLines);

// Ticks fade in from the left
html = '';
for (let i = 17; i < 103; i++) {
    const big = i % 35 === 32;
    const opacity = Math.min(1, (i - 15) / 10);
    html += `<path d="M${xAt(i)} 1V${big ? 18 : 12}" stroke="#666" stroke-width="${big ? 3 : 1.5}" opacity="${opacity}" />`;
}
document.getElementById('ticks').innerHTML = html;
```
